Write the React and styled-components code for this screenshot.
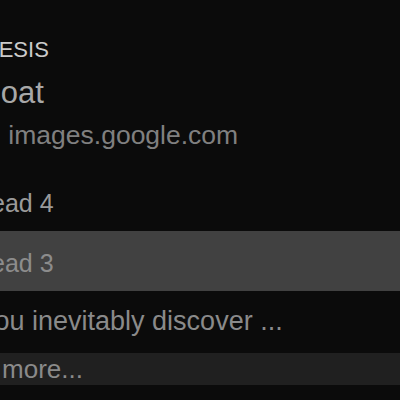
import React from 'react';
import styled, { createGlobalStyle } from 'styled-components';

const GlobalStyle = createGlobalStyle`
  html, body {
    margin: 0;
    padding: 0;
    background: #0b0b0b;
  }
  body {
    font-family: "Liberation Sans", Arial, Helvetica, sans-serif;
  }
`;

const Screen = styled.div`
  width: 400px;
  height: 400px;
  overflow: hidden;
  background: #0b0b0b;
  display: flex;
  flex-direction: column;
  padding-top: 30px;
  box-sizing: border-box;
`;

// text lines are cropped on the left, so each one keeps its own indent
const Text = styled.div`
  white-space: nowrap;
  font-size: ${p => p.$size}px;
  color: ${p => p.$color};
  margin-left: ${p => p.$shift}px;
`;

const SectionHeader = styled.div`
  height: 40px;
  line-height: 40px;
`;

const Title = styled.div`
  height: 46px;
  line-height: 46px;
`;

const Source = styled.div`
  height: 38px;
  line-height: 38px;
  margin-bottom: 17px;
`;

const Row = styled.div`
  height: 60px;
  line-height: 60px;
  padding-top: 2px;
  box-sizing: border-box;
  background: ${p => (p.$selected ? '#414141' : 'transparent')};
`;

const Snippet = styled.div`
  height: 60px;
  line-height: 60px;
  margin-bottom: 2px;
`;

const MoreBar = styled.div`
  height: 32px;
  line-height: 32px;
  background: #202020;
`;

const reads = [
  { label: 'Read 4', selected: false },
  { label: 'Read 3', selected: true },
];

export default function App() {
  return (
    <>
      <GlobalStyle />
      <Screen>
        <SectionHeader>
          <Text $size={22} $color="#cbcbcb" $shift={-49}>GENESIS</Text>
        </SectionHeader>
        <Title>
          <Text $size={31} $color="#a8a8a8" $shift={-20}>Boat</Text>
        </Title>
        <Source>
          <Text $size={26.5} $color="#808080" $shift={-52}>from images.google.com</Text>
        </Source>
        {reads.map(r => (
          <Row key={r.label} $selected={r.selected}>
            <Text $size={25} $color={r.selected ? '#8c8c8c' : '#9a9a9a'} $shift={-27}>
              {r.label}
            </Text>
          </Row>
        ))}
        <Snippet>
          <Text $size={27} $color="#8a8a8a" $shift={-19}>you inevitably discover ...</Text>
        </Snippet>
        <MoreBar>
          <Text $size={26} $color="#8a8a8a" $shift={-63}>Load more...</Text>
        </MoreBar>
      </Screen>
    </>
  );
}
